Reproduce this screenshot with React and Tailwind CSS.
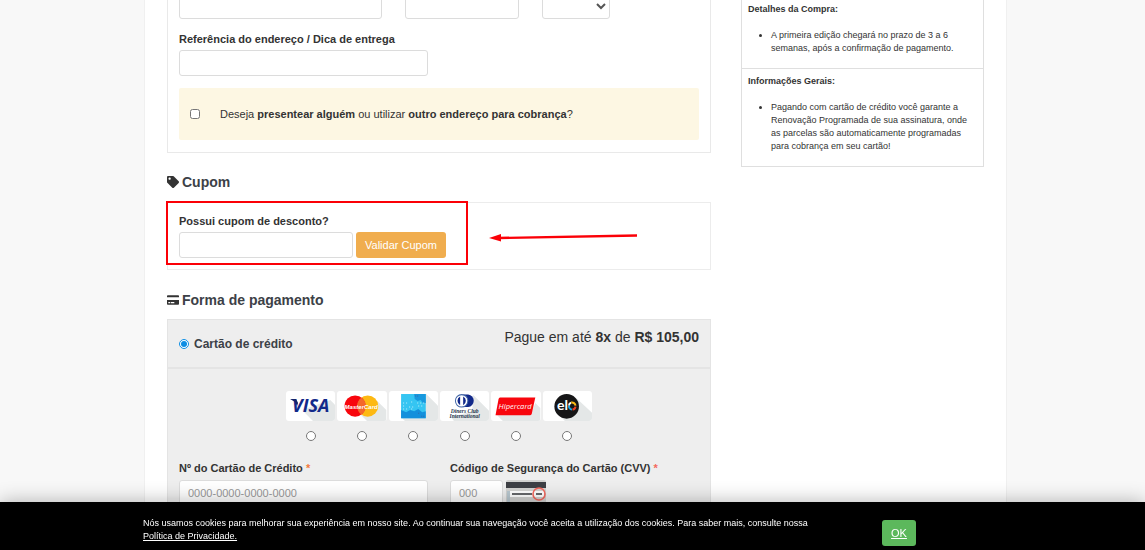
import { useState } from "react";
import { FaTag, FaCreditCard } from "react-icons/fa";

const inputClass =
  "h-[26px] rounded-[3px] border border-[#dcdcdc] bg-white px-2 text-[11px] text-[#555] placeholder:text-[#999] outline-none";

const Shade = ({ points }) => <polygon points={points} fill="#e4e7e7" />;

const Visa = () => (
  <svg viewBox="0 0 49 30" className="block w-full">
    <Shade points="16,19 44,9 49,14 49,30 27,30" />
    <text x="6" y="21" fontFamily="Open Sans, Liberation Sans, sans-serif" fontSize="18" fontWeight="700" fontStyle="italic" fill="#12298a">
      VISA
    </text>
    <path d="M4 8h6l2 4-1 3-2-4z" fill="#16236a" />
  </svg>
);

const Mastercard = () => (
  <svg viewBox="0 0 49 30" className="block w-full">
    <Shade points="24,24 40,10 49,19 49,30 30,30" />
    <circle cx="30.500" cy="15" r="10.500" fill="#fdb913" />
    <circle cx="18" cy="15" r="10.500" fill="#f8060d" />
    <path d="M24.300 6.500a10.500 10.500 0 0 1 0 17 10.500 10.500 0 0 1 0-17z" fill="#f4672a" />
    <text x="24" y="17.500" textAnchor="middle" fontFamily="Liberation Sans, sans-serif" fontSize="6" fontWeight="700" fontStyle="italic" fill="#fff">
      MasterCard
    </text>
  </svg>
);

const Amex = () => (
  <svg viewBox="0 0 49 30" className="block w-full">
    <Shade points="13,27 37,3 49,15 49,30 16,30" />
    <rect x="12" y="3" width="24.500" height="24" fill="#35c5f2" />
    <path d="M25 3h11.500v9h-3l-2-3-3 1-3-2z" fill="#1798de" />
    <path d="M12 19l5 2 4-2 4 1 4-2 4 3 3.500-1v7H12z" fill="#1390dc" />
    <path d="M14 12h6M22 11h3M28 12h7M14 15h3M20 16h6M29 15h6M14 18h4M22 18h3" stroke="#b9edfb" strokeWidth="1" strokeDasharray="1 2" />
    <path d="M29 22h2M32 25h3M26 5h3" stroke="#3667a8" strokeWidth="1" strokeDasharray="1 1" />
  </svg>
);

const Diners = () => (
  <svg viewBox="0 0 49 30" className="block w-full">
    <Shade points="33,4 49,20 49,30 14,30 11,26 32,20" />
    <path d="M21 3.500h7a6.300 6.300 0 0 1 0 12.500h-7z" fill="#12298a" />
    <circle cx="21.500" cy="9.800" r="6.200" fill="#fff" stroke="#4468a8" strokeWidth="1" />
    <path d="M20 5.500a4.800 4.800 0 0 0 0 8.600zM23 5.500a4.800 4.800 0 0 1 0 8.600z" fill="#12298a" />
    <text x="24.500" y="22" textAnchor="middle" fontFamily="Liberation Serif, serif" fontSize="5.500" fontWeight="700" fontStyle="italic" fill="#26354b">
      Diners Club
    </text>
    <text x="24.500" y="26.500" textAnchor="middle" fontFamily="Liberation Serif, serif" fontSize="5.500" fontWeight="700" fontStyle="italic" fill="#26354b">
      International
    </text>
  </svg>
);

const Hipercard = () => (
  <svg viewBox="0 0 49 30" className="block w-full">
    <Shade points="6,24 40,22 44,12 49,17 49,30 12,30" />
    <path d="M9 6.500h35l-3.500 16q-.5 1.500-2 1.500H4.500l3-16q.3-1.500 1.500-1.500z" fill="#f8060d" />
    <text x="24" y="18" textAnchor="middle" fontFamily="Open Sans, Liberation Sans, sans-serif" fontSize="7.500" fontWeight="500" fontStyle="italic" fill="#fff">
      Hipercard
    </text>
  </svg>
);

const Elo = () => (
  <svg viewBox="0 0 49 30" className="block w-full">
    <Shade points="16,24 33,7 49,22 49,30 22,30" />
    <circle cx="23.500" cy="15.300" r="12.200" fill="#161617" />
    <text x="14" y="19" fontFamily="Lato, Liberation Sans, sans-serif" fontSize="14" fontWeight="700" fill="#fff">
      el
    </text>
    <path d="M25.800 14.500a3.500 3.500 0 0 1 2-3" fill="none" stroke="#fff" strokeWidth="2" />
    <path d="M28 11.500a3.500 3.500 0 0 1 4.300 3" fill="none" stroke="#fcb913" strokeWidth="2" />
    <path d="M32.300 15.500a3.500 3.500 0 0 1-3 3" fill="none" stroke="#ef4123" strokeWidth="2" />
    <path d="M28.800 18.500a3.500 3.500 0 0 1-3-4" fill="none" stroke="#19a3e0" strokeWidth="2" />
  </svg>
);

const CvvCard = () => (
  <svg width="40" height="30" viewBox="0 0 40 30" className="overflow-visible">
    <rect x="0" y="0" width="40" height="30" rx="2" fill="#d3d3d1" />
    <rect x="0" y="2" width="40" height="6" fill="#3e4045" />
    <rect x="1" y="11" width="3" height="19" fill="#b9c8d0" />
    <rect x="4" y="11" width="34" height="6" fill="#fff" />
    <path d="M6 14h20M30 14h6" stroke="#66686b" strokeWidth="2" />
    <circle cx="33" cy="14" r="6" fill="none" stroke="#f4695f" strokeWidth="1.600" />
  </svg>
);

const cards = [
  { id: "visa", name: "Visa", Logo: Visa },
  { id: "mastercard", name: "MasterCard", Logo: Mastercard },
  { id: "amex", name: "American Express", Logo: Amex },
  { id: "diners", name: "Diners Club", Logo: Diners },
  { id: "hipercard", name: "Hipercard", Logo: Hipercard },
  { id: "elo", name: "Elo", Logo: Elo },
];

const SectionTitle = ({ icon: Icon, children }) => (
  <h2 className="flex items-center gap-[3px] text-[14px] leading-5 font-bold text-[#3c4147]">
    <Icon className="size-3 text-[#333]" />
    {children}
  </h2>
);

const Address = () => (
  <section className="border border-t-0 border-[#e9e9e9] px-[11px] pb-3">
    <div className="-mt-[7px] flex gap-[23px]">
      <input aria-label="Bairro" className={`${inputClass} w-[203px]`} />
      <input aria-label="Cidade" className={`${inputClass} w-[114px]`} />
      <select aria-label="Estado" className="h-[26px] w-[68px] rounded-[3px] border border-[#dcdcdc] bg-white text-[11px] text-[#555]">
        <option></option>
      </select>
    </div>
    <label htmlFor="reference" className="mt-3 block text-[11px] leading-4 font-bold">
      Referência do endereço / Dica de entrega
    </label>
    <input id="reference" className={`${inputClass} mt-[3px] block w-[249px]`} />
    <div className="mt-3 flex h-[52px] items-center rounded-[2px] bg-[#fdf7e3] pl-[11px]">
      <input id="gift" type="checkbox" className="size-[10px]" />
      <label htmlFor="gift" className="pl-5 text-[11px] leading-4">
        Deseja <b>presentear alguém</b> ou utilizar <b>outro endereço para cobrança</b>?
      </label>
    </div>
  </section>
);

const Coupon = () => {
  const [coupon, setCoupon] = useState("");

  return (
    <section className="relative mt-[10px] border border-[#ececec] px-[11px] pt-[10px] pb-[11px]">
      <label htmlFor="coupon" className="block text-[11px] leading-4 font-bold">
        Possui cupom de desconto?
      </label>
      <div className="mt-[3px] flex gap-[3px]">
        <input
          id="coupon"
          value={coupon}
          onChange={(e) => setCoupon(e.target.value)}
          className={`${inputClass} w-[174px]`}
        />
        <button type="button" className="h-[26px] rounded-[3px] bg-[#f0ad4e] px-[9px] text-[11px] text-white">
          Validar Cupom
        </button>
      </div>
      <div className="pointer-events-none absolute -top-0.5 -left-0.5 h-16 w-[302px] border-2 border-[#fb0007]" />
      <svg width="150" height="12" className="pointer-events-none absolute top-[29px] left-[321px]">
        <path d="M148 3.500L10 6" stroke="#fb0007" strokeWidth="2.400" />
        <polygon points="0,6 12,2 12,9.500" fill="#fb0007" />
      </svg>
    </section>
  );
};

const Payment = () => {
  const [card, setCard] = useState("");

  return (
    <section className="mt-[9px] border border-[#e4e4e4] bg-[#eee] pb-10">
      <div className="flex h-[49px] justify-between border-b-2 border-[#e4e4e4] px-[11px]">
        <label className="flex items-center gap-[5px] text-[12px] font-bold text-[#3c4147]">
          <input type="radio" name="method" defaultChecked className="size-[10px] accent-[#0d8de3]" />
          Cartão de crédito
        </label>
        <p className="pt-[7px] text-[14px] leading-5">
          Pague em até <b>8x</b> de <b>R$ 105,00</b>
        </p>
      </div>
      <div className="mx-auto mt-[22px] grid w-[308px] grid-cols-6">
        {cards.map(({ id, name, Logo }) => (
          <label key={id} className="flex flex-col items-center gap-[10px] px-px">
            <span className="block w-full overflow-hidden rounded-[3px] bg-white">
              <Logo />
            </span>
            <input
              type="radio"
              name="card"
              aria-label={name}
              checked={card === id}
              onChange={() => setCard(id)}
              className="size-[10px]"
            />
          </label>
        ))}
      </div>
      <div className="mt-[19px] grid grid-cols-2 px-[11px]">
        <div>
          <label htmlFor="number" className="block text-[11px] leading-4 font-bold">
            Nº do Cartão de Crédito <span className="text-[#f47a3c]">*</span>
          </label>
          <input id="number" placeholder="0000-0000-0000-0000" className={`${inputClass} mt-1 block w-[249px]`} />
        </div>
        <div className="pl-[11px]">
          <label htmlFor="cvv" className="block text-[11px] leading-4 font-bold">
            Código de Segurança do Cartão (CVV) <span className="text-[#f4695f]">*</span>
          </label>
          <div className="mt-1 flex gap-[3px]">
            <input id="cvv" placeholder="000" className={`${inputClass} w-[53px]`} />
            <CvvCard />
          </div>
        </div>
      </div>
    </section>
  );
};

const Details = () => (
  <aside className="-mt-1 w-[243px] shrink-0 self-start border border-[#dfdfdf] text-[9px] leading-[13px]">
    <div className="border-b border-[#dfdfdf] px-[6px] pt-[6px] pb-[13px]">
      <h3 className="font-bold">Detalhes da Compra:</h3>
      <ul className="mt-[13px] list-disc pl-[23px]">
        <li>A primeira edição chegará no prazo de 3 a 6 semanas, após a confirmação de pagamento.</li>
      </ul>
    </div>
    <div className="px-[6px] pt-[6px] pb-[13px]">
      <h3 className="font-bold">Informações Gerais:</h3>
      <ul className="mt-[13px] list-disc pl-[23px]">
        <li>
          Pagando com cartão de crédito você garante a Renovação Programada de sua assinatura, onde as parcelas são
          automaticamente programadas para cobrança em seu cartão!
        </li>
      </ul>
    </div>
  </aside>
);

const CookieBar = () => (
  <footer className="fixed inset-x-0 bottom-0 bg-black pl-1 text-white shadow-[0_0_20px_rgba(0,0,0,0.3)]">
    <div className="mx-auto flex h-12 max-w-[863px] items-start pt-[15px]">
      <p className="w-[739px] text-[9px] leading-[13px]">
        Nós usamos cookies para melhorar sua experiência em nosso site. Ao continuar sua navegação você aceita a
        utilização dos cookies. Para saber mais, consulte nossa
        <br />
        <a href="#privacidade" className="underline">
          Política de Privacidade.
        </a>
      </p>
      <button type="button" className="mt-[3px] h-[26px] w-[34px] rounded-[3px] bg-[#5cb85c] text-[11px] underline">
        OK
      </button>
    </div>
  </footer>
);

export default function App() {
  return (
    <div className="h-screen overflow-hidden bg-[#f8f8f8] pl-1.5 font-['Liberation_Sans',Arial,sans-serif] text-[#333]">
      <div className="mx-auto flex min-h-full max-w-[863px] gap-[30px] border-x border-[#f0f0f0] bg-white px-[22px]">
        <main className="min-w-0 flex-1">
          <Address />
          <div className="mt-[19px]">
            <SectionTitle icon={FaTag}>Cupom</SectionTitle>
          </div>
          <Coupon />
          <div className="mt-5">
            <SectionTitle icon={FaCreditCard}>Forma de pagamento</SectionTitle>
          </div>
          <Payment />
        </main>
        <Details />
      </div>
      <CookieBar />
    </div>
  );
}
